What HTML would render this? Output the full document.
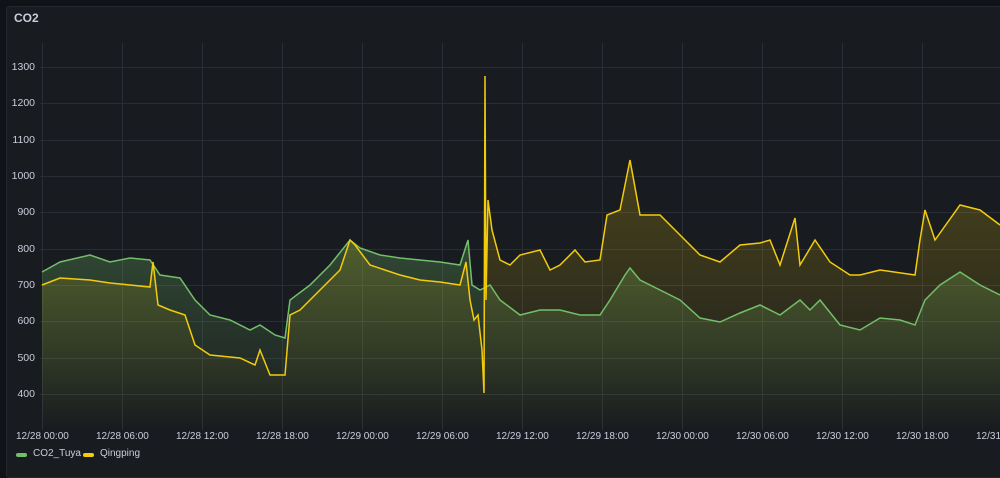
<!DOCTYPE html>
<html><head><meta charset="utf-8"><style>
html,body{margin:0;padding:0;background:#111217;width:1000px;height:463px;overflow:hidden;font-family:"Liberation Sans",sans-serif}
.panel{position:absolute;left:6px;top:6px;width:1000px;height:470px;background:#181b1f;border:1px solid #24272d;border-radius:3px}
.title{position:absolute;left:14px;top:11px;color:#ccccdc;font-size:12px;font-weight:bold}
.yl{position:absolute;left:0;width:35px;text-align:right;color:#ccccdc;font-size:10.5px}
.xl{position:absolute;top:431px;color:#ccccdc;font-size:10px;white-space:nowrap}
.leg{position:absolute;top:448px;color:#ccccdc;font-size:10px;white-space:nowrap}
.sw{position:absolute;top:453px;width:11px;height:4px;border-radius:2px}
</style></head><body>
<div class="panel"></div>
<div class="title">CO2</div>
<svg width="1000" height="463" style="position:absolute;left:0;top:0">
<defs>
<linearGradient id="gy" x1="0" y1="0" x2="0" y2="1"><stop offset="0" stop-color="#f2cc0c" stop-opacity="0.28"/><stop offset="0.55" stop-color="#f2cc0c" stop-opacity="0.14"/><stop offset="1" stop-color="#f2cc0c" stop-opacity="0"/></linearGradient>
<linearGradient id="gg" x1="0" y1="0" x2="0" y2="1"><stop offset="0" stop-color="#73bf69" stop-opacity="0.28"/><stop offset="0.6" stop-color="#73bf69" stop-opacity="0.12"/><stop offset="1" stop-color="#73bf69" stop-opacity="0"/></linearGradient>
</defs>
<g stroke="#2a2d33" stroke-width="1">
<line x1="40" y1="67.5" x2="1000" y2="67.5"/><line x1="40" y1="103.5" x2="1000" y2="103.5"/><line x1="40" y1="140.5" x2="1000" y2="140.5"/><line x1="40" y1="176.5" x2="1000" y2="176.5"/><line x1="40" y1="212.5" x2="1000" y2="212.5"/><line x1="40" y1="249.5" x2="1000" y2="249.5"/><line x1="40" y1="285.5" x2="1000" y2="285.5"/><line x1="40" y1="321.5" x2="1000" y2="321.5"/><line x1="40" y1="358.5" x2="1000" y2="358.5"/><line x1="40" y1="394.5" x2="1000" y2="394.5"/>
<line x1="42.5" y1="43" x2="42.5" y2="430"/><line x1="122.5" y1="43" x2="122.5" y2="430"/><line x1="202.5" y1="43" x2="202.5" y2="430"/><line x1="282.5" y1="43" x2="282.5" y2="430"/><line x1="362.5" y1="43" x2="362.5" y2="430"/><line x1="442.5" y1="43" x2="442.5" y2="430"/><line x1="522.5" y1="43" x2="522.5" y2="430"/><line x1="602.5" y1="43" x2="602.5" y2="430"/><line x1="682.5" y1="43" x2="682.5" y2="430"/><line x1="762.5" y1="43" x2="762.5" y2="430"/><line x1="842.5" y1="43" x2="842.5" y2="430"/><line x1="922.5" y1="43" x2="922.5" y2="430"/>
</g>
<polygon fill="url(#gg)" points="42,430 42,272 60,262 90,255 110,262 130,258 150,260 160,275 180,278 195,300 210,315 230,320 250,330 260,325 275,335 285,338 290,300 310,285 330,265 350,240 360,248 380,255 400,258 420,260 440,262 460,265 468,240 472,285 480,290 490,285 500,300 520,315 540,310 560,310 580,315 600,315 610,300 625,275 630,268 640,280 660,290 680,300 700,318 720,322 740,313 760,305 780,315 800,300 810,310 820,300 840,325 860,330 880,318 900,320 915,325 925,300 940,285 960,272 980,285 1000,295 1000,430"/>
<polygon fill="url(#gy)" points="42,430 42,285 60,278 90,280 110,283 130,285 150,287 153,262 158,305 170,310 185,315 195,345 210,355 240,358 255,365 260,350 270,375 285,375 290,315 300,310 320,290 340,270 350,240 355,245 370,265 400,275 420,280 440,282 460,285 466,262 470,300 474,320 478,315 482,350 484,393 485,76 486,300 488,200 492,230 500,260 510,265 520,255 540,250 550,270 560,265 575,250 585,262 600,260 607,215 620,210 630,160 640,215 660,215 680,235 700,255 720,262 740,245 760,243 770,240 780,265 795,218 800,265 815,240 830,262 850,275 860,275 880,270 915,275 920,240 925,210 935,240 960,205 980,210 1000,225 1000,430"/>
<polyline fill="none" stroke="#73bf69" stroke-width="1.5" points="42,272 60,262 90,255 110,262 130,258 150,260 160,275 180,278 195,300 210,315 230,320 250,330 260,325 275,335 285,338 290,300 310,285 330,265 350,240 360,248 380,255 400,258 420,260 440,262 460,265 468,240 472,285 480,290 490,285 500,300 520,315 540,310 560,310 580,315 600,315 610,300 625,275 630,268 640,280 660,290 680,300 700,318 720,322 740,313 760,305 780,315 800,300 810,310 820,300 840,325 860,330 880,318 900,320 915,325 925,300 940,285 960,272 980,285 1000,295"/>
<polyline fill="none" stroke="#f2cc0c" stroke-width="1.5" points="42,285 60,278 90,280 110,283 130,285 150,287 153,262 158,305 170,310 185,315 195,345 210,355 240,358 255,365 260,350 270,375 285,375 290,315 300,310 320,290 340,270 350,240 355,245 370,265 400,275 420,280 440,282 460,285 466,262 470,300 474,320 478,315 482,350 484,393 485,76 486,300 488,200 492,230 500,260 510,265 520,255 540,250 550,270 560,265 575,250 585,262 600,260 607,215 620,210 630,160 640,215 660,215 680,235 700,255 720,262 740,245 760,243 770,240 780,265 795,218 800,265 815,240 830,262 850,275 860,275 880,270 915,275 920,240 925,210 935,240 960,205 980,210 1000,225"/>
</svg>
<div class="yl" style="top:61px">1300</div><div class="yl" style="top:97px">1200</div><div class="yl" style="top:134px">1100</div><div class="yl" style="top:170px">1000</div><div class="yl" style="top:206px">900</div><div class="yl" style="top:243px">800</div><div class="yl" style="top:279px">700</div><div class="yl" style="top:315px">600</div><div class="yl" style="top:352px">500</div><div class="yl" style="top:388px">400</div>
<div class="xl" style="left:16px">12/28 00:00</div><div class="xl" style="left:96px">12/28 06:00</div><div class="xl" style="left:176px">12/28 12:00</div><div class="xl" style="left:256px">12/28 18:00</div><div class="xl" style="left:336px">12/29 00:00</div><div class="xl" style="left:416px">12/29 06:00</div><div class="xl" style="left:496px">12/29 12:00</div><div class="xl" style="left:576px">12/29 18:00</div><div class="xl" style="left:656px">12/30 00:00</div><div class="xl" style="left:736px">12/30 06:00</div><div class="xl" style="left:816px">12/30 12:00</div><div class="xl" style="left:896px">12/30 18:00</div><div class="xl" style="left:976px">12/31</div>
<div class="sw" style="left:16px;background:#73bf69"></div><div class="leg" style="left:33px">CO2_Tuya</div>
<div class="sw" style="left:83px;background:#f2cc0c"></div><div class="leg" style="left:100px">Qingping</div>
</body></html>
